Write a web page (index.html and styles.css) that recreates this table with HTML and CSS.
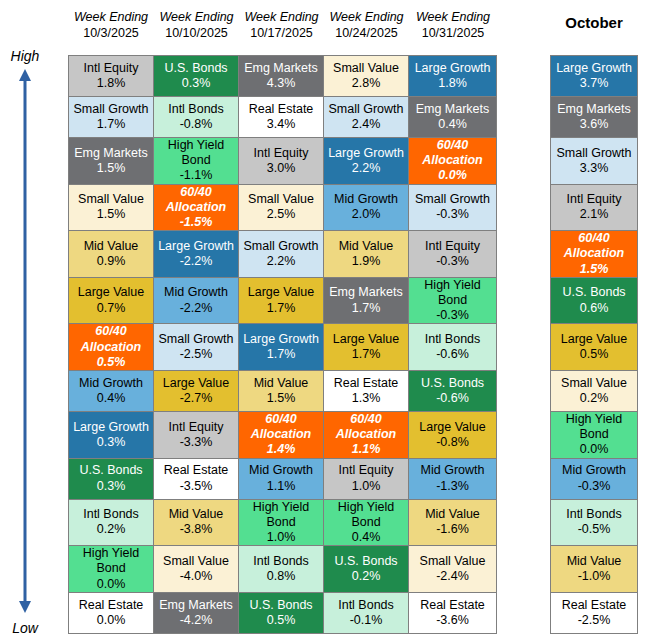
FILE: index.html
```html
<!DOCTYPE html>
<html lang="en">
<head>
<meta charset="utf-8">
<title>Asset Class Returns – October 2025</title>
<link rel="stylesheet" href="styles.css">
</head>
<body>
<div class="page">
  <div class="axis">
    <div class="axis-label">High</div>
    <svg class="arrow" width="14" height="544" viewBox="0 0 14 544" aria-hidden="true">
      <polygon points="7,0 13,12 1,12" fill="#2f61a3"/>
      <rect x="5.5" y="11" width="3" height="522" fill="#2f61a3"/>
      <polygon points="1,532 13,532 7,544" fill="#2f61a3"/>
    </svg>
    <div class="axis-label low">Low</div>
  </div>
  <div class="main">
    <div class="head">
      <div class="wk"><i>Week Ending</i><br>10/3/2025</div>
      <div class="wk"><i>Week Ending</i><br>10/10/2025</div>
      <div class="wk"><i>Week Ending</i><br>10/17/2025</div>
      <div class="wk"><i>Week Ending</i><br>10/24/2025</div>
      <div class="wk"><i>Week Ending</i><br>10/31/2025</div>
      <div class="month">October</div>
    </div>
    <div class="grid">
      <div class="c ie">Intl Equity<br>1.8%</div>
      <div class="c usb">U.S. Bonds<br>0.3%</div>
      <div class="c em">Emg Markets<br>4.3%</div>
      <div class="c sv">Small Value<br>2.8%</div>
      <div class="c lg">Large Growth<br>1.8%</div>
      <div class="c lg">Large Growth<br>3.7%</div>

      <div class="c sg">Small Growth<br>1.7%</div>
      <div class="c ib">Intl Bonds<br>-0.8%</div>
      <div class="c re">Real Estate<br>3.4%</div>
      <div class="c sg">Small Growth<br>2.4%</div>
      <div class="c em">Emg Markets<br>0.4%</div>
      <div class="c em">Emg Markets<br>3.6%</div>

      <div class="c em">Emg Markets<br>1.5%</div>
      <div class="c hy">High Yield<br>Bond<br>-1.1%</div>
      <div class="c ie">Intl Equity<br>3.0%</div>
      <div class="c lg">Large Growth<br>2.2%</div>
      <div class="c al">60/40<br>Allocation<br>0.0%</div>
      <div class="c sg">Small Growth<br>3.3%</div>

      <div class="c sv">Small Value<br>1.5%</div>
      <div class="c al">60/40<br>Allocation<br>-1.5%</div>
      <div class="c sv">Small Value<br>2.5%</div>
      <div class="c mg">Mid Growth<br>2.0%</div>
      <div class="c sg">Small Growth<br>-0.3%</div>
      <div class="c ie">Intl Equity<br>2.1%</div>

      <div class="c mv">Mid Value<br>0.9%</div>
      <div class="c lg">Large Growth<br>-2.2%</div>
      <div class="c sg">Small Growth<br>2.2%</div>
      <div class="c mv">Mid Value<br>1.9%</div>
      <div class="c ie">Intl Equity<br>-0.3%</div>
      <div class="c al">60/40<br>Allocation<br>1.5%</div>

      <div class="c lv">Large Value<br>0.7%</div>
      <div class="c mg">Mid Growth<br>-2.2%</div>
      <div class="c lv">Large Value<br>1.7%</div>
      <div class="c em">Emg Markets<br>1.7%</div>
      <div class="c hy">High Yield<br>Bond<br>-0.3%</div>
      <div class="c usb">U.S. Bonds<br>0.6%</div>

      <div class="c al">60/40<br>Allocation<br>0.5%</div>
      <div class="c sg">Small Growth<br>-2.5%</div>
      <div class="c lg">Large Growth<br>1.7%</div>
      <div class="c lv">Large Value<br>1.7%</div>
      <div class="c ib">Intl Bonds<br>-0.6%</div>
      <div class="c lv">Large Value<br>0.5%</div>

      <div class="c mg">Mid Growth<br>0.4%</div>
      <div class="c lv">Large Value<br>-2.7%</div>
      <div class="c mv">Mid Value<br>1.5%</div>
      <div class="c re">Real Estate<br>1.3%</div>
      <div class="c usb">U.S. Bonds<br>-0.6%</div>
      <div class="c sv">Small Value<br>0.2%</div>

      <div class="c lg">Large Growth<br>0.3%</div>
      <div class="c ie">Intl Equity<br>-3.3%</div>
      <div class="c al">60/40<br>Allocation<br>1.4%</div>
      <div class="c al">60/40<br>Allocation<br>1.1%</div>
      <div class="c lv">Large Value<br>-0.8%</div>
      <div class="c hy">High Yield<br>Bond<br>0.0%</div>

      <div class="c usb">U.S. Bonds<br>0.3%</div>
      <div class="c re">Real Estate<br>-3.5%</div>
      <div class="c mg">Mid Growth<br>1.1%</div>
      <div class="c ie">Intl Equity<br>1.0%</div>
      <div class="c mg">Mid Growth<br>-1.3%</div>
      <div class="c mg">Mid Growth<br>-0.3%</div>

      <div class="c ib">Intl Bonds<br>0.2%</div>
      <div class="c mv">Mid Value<br>-3.8%</div>
      <div class="c hy">High Yield<br>Bond<br>1.0%</div>
      <div class="c hy">High Yield<br>Bond<br>0.4%</div>
      <div class="c mv">Mid Value<br>-1.6%</div>
      <div class="c ib">Intl Bonds<br>-0.5%</div>

      <div class="c hy">High Yield<br>Bond<br>0.0%</div>
      <div class="c sv">Small Value<br>-4.0%</div>
      <div class="c ib">Intl Bonds<br>0.8%</div>
      <div class="c usb">U.S. Bonds<br>0.2%</div>
      <div class="c sv">Small Value<br>-2.4%</div>
      <div class="c mv">Mid Value<br>-1.0%</div>

      <div class="c re">Real Estate<br>0.0%</div>
      <div class="c em">Emg Markets<br>-4.2%</div>
      <div class="c usb">U.S. Bonds<br>0.5%</div>
      <div class="c ib">Intl Bonds<br>-0.1%</div>
      <div class="c re">Real Estate<br>-3.6%</div>
      <div class="c re">Real Estate<br>-2.5%</div>
    </div>
  </div>
</div>
</body>
</html>
```
FILE: styles.css
```css
* { box-sizing: border-box; }

html, body {
  margin: 0;
  padding: 0;
  background: #ffffff;
}

body {
  font-family: "Liberation Sans", Arial, sans-serif;
  color: #000000;
}

.page {
  display: flex;
  width: 659px;
  height: 640px;
}

/* left High/Low axis */
.axis {
  width: 50px;
  margin-right: 18px;
  display: flex;
  flex-direction: column;
  align-items: center;
  padding-top: 48px;
}

.axis-label {
  font-style: italic;
  font-size: 14px;
  line-height: 16px;
}

.arrow {
  display: block;
  margin-top: 5px;
}

.axis-label.low {
  margin-top: 7px;
}

/* header row */
.head {
  display: grid;
  grid-template-columns: 86px 85px 85px 85px 88px 141px;
  height: 55px;
}

.wk {
  text-align: center;
  font-size: 12.5px;
  line-height: 16px;
  padding-top: 8.5px;
}

.month {
  margin-left: 53px;
  text-align: center;
  font-weight: bold;
  font-size: 15px;
  line-height: 18px;
  padding-top: 14px;
}

/* data grid */
.grid {
  display: grid;
  grid-template-columns: 86px 85px 85px 85px 88px 141px;
}

.c {
  display: flex;
  flex-direction: column;
  justify-content: center;
  text-align: center;
  min-height: 41px;
  font-size: 12.5px;
  line-height: 15.2px;
  border-right: 1px solid #7f7f7f;
  border-bottom: 1px solid #7f7f7f;
  white-space: nowrap;
}

.c:nth-child(-n+6) {
  border-top: 1px solid #7f7f7f;
  min-height: 42px;
}

.c:nth-child(6n+1) {
  border-left: 1px solid #7f7f7f;
}

.c:nth-child(6n) {
  margin-left: 53px;
  border-left: 1px solid #7f7f7f;
}

/* asset-class colours */
.ie  { background: #c6c6c6; }
.usb { background: #1f8b4d; color: #ffffff; }
.em  { background: #6e6f72; color: #ffffff; }
.sv  { background: #fbf1d5; }
.lg  { background: #2676a8; color: #ffffff; }
.sg  { background: #cfe4f2; }
.ib  { background: #c7f0db; }
.re  { background: #ffffff; }
.hy  { background: #53df91; }
.mv  { background: #eed881; }
.lv  { background: #e3bf2f; }
.mg  { background: #68b0dc; }
.al  {
  background: #ff6600;
  color: #ffffff;
  font-weight: bold;
  font-style: italic;
}
```
